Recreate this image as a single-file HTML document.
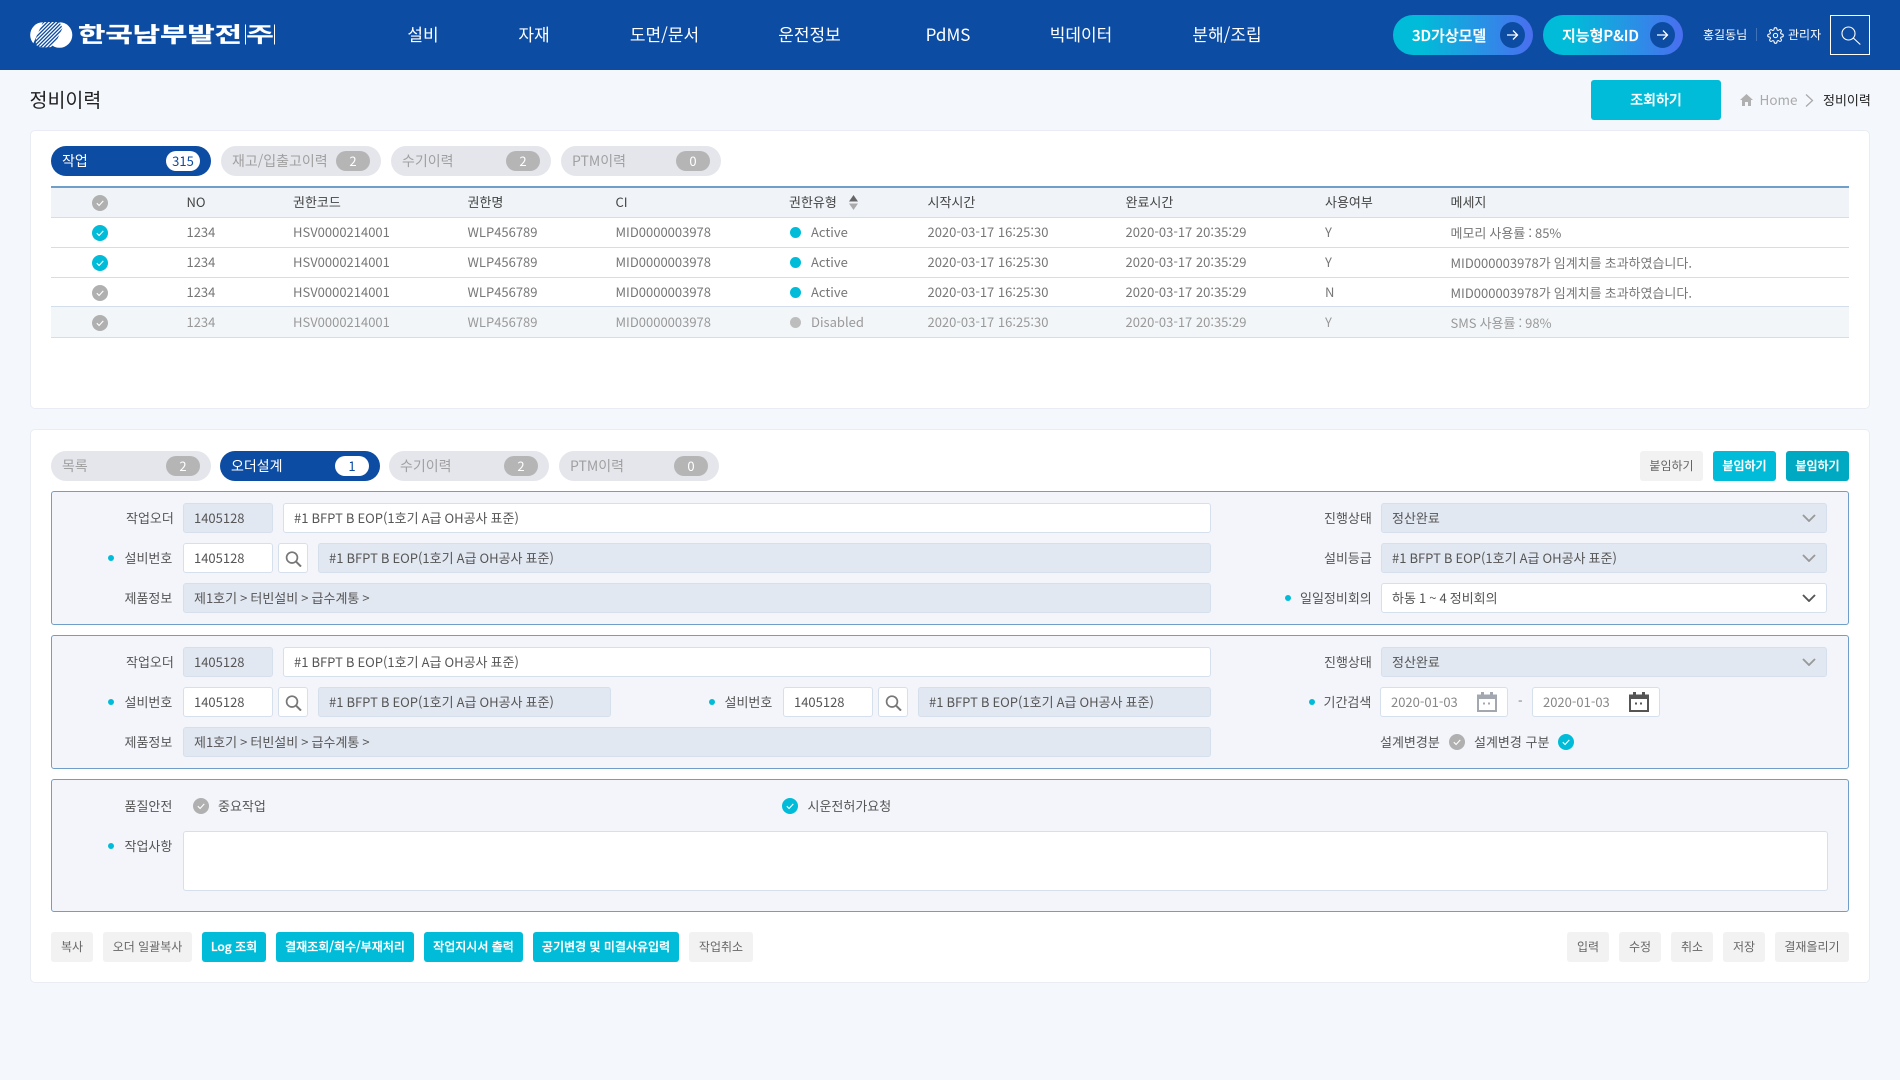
<!DOCTYPE html>
<html lang="ko"><head><meta charset="utf-8"><title>정비이력</title>
<style>
*{box-sizing:border-box}
html,body{margin:0;padding:0;width:1900px;height:1080px;overflow:hidden;background:#f4f7fc}
body{position:relative;font-family:"Noto Sans CJK KR","Liberation Sans",sans-serif;font-size:13px;color:#555;font-feature-settings:"calt" 0}
.a,.t,.f,.b,.tab,.lb,svg.i{position:absolute}
.t{white-space:nowrap;line-height:20px;height:20px}
.c{transform:translateX(-50%)}
.nav{color:#fff;font-size:17px;top:24px}
.card{position:absolute;left:30px;width:1840px;background:#fff;border:1px solid #e9edf3;border-radius:5px}
.tab{height:30px;width:160px;border-radius:15px;background:#e4e6eb;color:#a0a0a0;font-size:14px;line-height:31px;padding-left:11px;white-space:nowrap}
.tab b{position:absolute;right:11px;top:5px;width:34px;height:20px;border-radius:10px;background:#b5b5b5;color:#fff;font-weight:400;font-size:13px;line-height:20px;text-align:center}
.tab.on{background:#0d4ca3;color:#fff}.tab.on b{background:#fff;color:#0d4ca3}
.hd{color:#444;top:192px}
.r{color:#777}.r4{color:#999}
.m{word-spacing:-.6px}
.ln{position:absolute;left:51px;width:1798px;height:1px;background:#d4deea}
.box{position:absolute;left:51px;width:1798px;background:#f3f5fa;border:1px solid #6f9ec9;border-radius:3px}
.f{height:30px;line-height:28px;border:1px solid #d5e0ec;border-radius:3px;background:#fff;padding-left:10px;color:#555;white-space:nowrap;overflow:hidden;word-spacing:-.6px}
.f.ro{background:#e2e8f2}
.lb{line-height:20px;height:20px;color:#555;white-space:nowrap}
.dot{position:absolute;width:6px;height:6px;border-radius:50%;background:#00bcd8}
.b{height:30px;line-height:29px;border-radius:3px;background:#f2f2f2;color:#666;font-size:12px;text-align:center;white-space:nowrap}
.b.y{background:#00bcd8;color:#fff;font-weight:500;-webkit-text-stroke:.25px #fff}
.pill{position:absolute;top:15px;height:40px;width:140px;border-radius:20px;background:linear-gradient(90deg,#00bcd8 0%,#00bcd8 20%,#4a6ef0 100%);color:#fff;font-size:15px;font-weight:500;line-height:41px;white-space:nowrap;-webkit-text-stroke:.25px #fff}
.pill i{position:absolute;top:7px;right:8px;width:25px;height:26px;border-radius:50%;background:#0d4ca3}
.pill svg{position:absolute;left:6px;top:7px}
</style></head><body>
<svg width="0" height="0" style="position:absolute"><defs>
<symbol id="ck" viewBox="0 0 16 16"><circle cx="8" cy="8" r="8" fill="currentColor"/><path d="M4.8 8.2l2.3 2.3 4.2-4.6" fill="none" stroke="#fff" stroke-width="1.1"/></symbol>
<symbol id="mg" viewBox="0 0 17 16"><circle cx="7" cy="6.6" r="5.4" fill="none" stroke="#777" stroke-width="1.7"/><path d="M11 10.6l5 5" stroke="#777" stroke-width="2" fill="none"/></symbol>
<symbol id="chev" viewBox="0 0 14 8"><path d="M1 1l6 6 6-6" fill="none" stroke="currentColor" stroke-width="1.9"/></symbol>
<symbol id="cal" viewBox="0 0 20 20"><path d="M1 3.5h18v15.5H1z" fill="none" stroke="currentColor" stroke-width="2"/><path d="M1 3h18v4H1zM4 0h3v3H4zM13 0h3v3h-3z" fill="currentColor"/><path d="M6 10.500h2v2H6zM11 10.500h2v2h-2z" fill="currentColor"/></symbol>
<pattern id="st" width="2.6" height="2.6" patternUnits="userSpaceOnUse" patternTransform="rotate(-45)"><rect width="2.600" height="1.300" fill="#fff"/></pattern>
</defs></svg>

<!-- header -->
<div class="a" style="left:0;top:0;width:1900px;height:70px;background:#0d4ca3"></div>
<svg class="i" style="left:30px;top:22px" width="44" height="26" viewBox="0 0 44 26">
<circle cx="13" cy="13" r="12.800" fill="#fff"/><circle cx="29.500" cy="13" r="12.800" fill="#fff"/>
<path d="M13 0h16.500l3 6L26 20 16 26l-10-1-3-3z" fill="#0d4ca3"/>
<path d="M12 .5C20 -1 31 0 37 3 38 10 30 22 22 25 14 26 9 25 6 23 5 15 8 5 12 .5z" fill="url(#st)"/>
</svg>
<svg class="i" style="left:76px;top:18px" width="205" height="32" viewBox="0 0 205 32">
<text x="2" y="24" font-family="Noto Sans CJK KR" font-weight="700" font-size="21" fill="#fff" textLength="164" lengthAdjust="spacingAndGlyphs" stroke="#fff" stroke-width=".3">한국남부발전</text>
<path d="M169.500 6.500v20M198.500 6.500v20" stroke="#fff" stroke-width="1"/>
<text x="170" y="24" font-family="Noto Sans CJK KR" font-weight="700" font-size="21" fill="#fff" textLength="28" lengthAdjust="spacingAndGlyphs">주</text>
</svg>
<div class="t nav c" style="left:423px">설비</div>
<div class="t nav c" style="left:534px">자재</div>
<div class="t nav c" style="left:664.500px">도면/문서</div>
<div class="t nav c" style="left:809.500px">운전정보</div>
<div class="t nav c" style="left:948px">PdMS</div>
<div class="t nav c" style="left:1081px">빅데이터</div>
<div class="t nav c" style="left:1227px">분해/조립</div>
<div class="pill" style="left:1393px;padding-left:19px">3D가상모델<i><svg width="13" height="12" viewBox="0 0 13 12"><path d="M1 6h10M7 1.500L11.500 6 7 10.500" fill="none" stroke="#fff" stroke-width="1.300"/></svg></i></div>
<div class="pill" style="left:1543px;padding-left:19px">지능형P&amp;ID<i><svg width="13" height="12" viewBox="0 0 13 12"><path d="M1 6h10M7 1.500L11.500 6 7 10.500" fill="none" stroke="#fff" stroke-width="1.300"/></svg></i></div>
<div class="t" style="left:1703px;top:25px;color:#fff;font-size:12px">홍길동님</div>
<div class="a" style="left:1756px;top:28px;width:1px;height:13px;background:#3f72b8"></div>
<svg class="i" style="left:1767px;top:27px" width="17" height="17" viewBox="0 0 24 24" fill="none" stroke="#fff" stroke-width="1.500"><circle cx="12" cy="12" r="3"/><path d="M19.400 15a1.650 1.650 0 0 0 .33 1.820l.06.06a2 2 0 0 1 0 2.830 2 2 0 0 1-2.830 0l-.06-.06a1.650 1.650 0 0 0-1.820-.33 1.650 1.650 0 0 0-1 1.510V21a2 2 0 0 1-2 2 2 2 0 0 1-2-2v-.09A1.650 1.650 0 0 0 9 19.400a1.650 1.650 0 0 0-1.820.33l-.06.06a2 2 0 0 1-2.830 0 2 2 0 0 1 0-2.830l.06-.06a1.650 1.650 0 0 0 .33-1.820 1.650 1.650 0 0 0-1.510-1H3a2 2 0 0 1-2-2 2 2 0 0 1 2-2h.09A1.650 1.650 0 0 0 4.600 9a1.650 1.650 0 0 0-.33-1.820l-.06-.06a2 2 0 0 1 0-2.830 2 2 0 0 1 2.830 0l.06.06a1.650 1.650 0 0 0 1.820.33H9a1.650 1.650 0 0 0 1-1.510V3a2 2 0 0 1 2-2 2 2 0 0 1 2 2v.09a1.650 1.650 0 0 0 1 1.510 1.650 1.650 0 0 0 1.820-.33l.06-.06a2 2 0 0 1 2.830 0 2 2 0 0 1 0 2.830l-.06.06a1.650 1.650 0 0 0-.33 1.820V9a1.650 1.650 0 0 0 1.510 1H21a2 2 0 0 1 2 2 2 2 0 0 1-2 2h-.09a1.650 1.650 0 0 0-1.510 1z"/></svg>
<div class="t" style="left:1788px;top:25px;color:#fff;font-size:12px">관리자</div>
<div class="a" style="left:1830px;top:15px;width:40px;height:40px;border:1px solid #fff"></div>
<svg class="i" style="left:1841px;top:26px" width="20" height="19" viewBox="0 0 20 19"><circle cx="7.500" cy="7.500" r="6.500" fill="none" stroke="#fff" stroke-width="1.100"/><path d="M12.300 12l7 6.500" stroke="#fff" stroke-width="1.100"/></svg>

<!-- title -->
<div class="t" style="left:29.500px;top:87px;height:24px;line-height:24px;font-size:19.500px;color:#222">정비이력</div>
<div class="a" style="left:1591px;top:80px;width:130px;height:40px;border-radius:3px;background:#00bcd8;color:#fff;font-size:14px;font-weight:500;text-align:center;line-height:41px;-webkit-text-stroke:.25px #fff">조회하기</div>
<svg class="i" style="left:1740px;top:94px" width="13" height="12" viewBox="0 0 13 12"><path d="M6.500 0L13 6h-2v6H8V8H5v4H2V6H0z" fill="#b0b0b0"/></svg>
<div class="t" style="left:1759.500px;top:89px;color:#aaa;font-size:13.500px">Home</div>
<svg class="i" style="left:1805px;top:94px" width="9" height="13" viewBox="0 0 9 13"><path d="M1 .5l6.500 6-6.500 6" fill="none" stroke="#aaa" stroke-width="1.300"/></svg>
<div class="t" style="left:1823px;top:90px;color:#222">정비이력</div>

<!-- card 1 -->
<div class="card" style="top:130px;height:279px"></div>
<div class="tab on" style="left:51px;top:146px">작업<b>315</b></div>
<div class="tab" style="left:221px;top:146px">재고/입출고이력<b>2</b></div>
<div class="tab" style="left:391px;top:146px">수기이력<b>2</b></div>
<div class="tab" style="left:561px;top:146px">PTM이력<b>0</b></div>

<div class="a" style="left:51px;top:186px;width:1798px;height:31px;background:#f0f4f8;border-top:2px solid #6f9ec9"></div>
<div class="a" style="left:51px;top:307px;width:1798px;height:30px;background:#f3f6f9"></div>
<div class="ln" style="top:217px"></div><div class="ln" style="top:247px"></div><div class="ln" style="top:277px"></div><div class="ln" style="top:306px"></div><div class="ln" style="top:337px"></div>

<svg class="i" style="left:92px;top:195px;color:#b0b0b0" width="16" height="16"><use href="#ck"/></svg>
<div class="t hd" style="left:186.500px">NO</div>
<div class="t hd" style="left:293px">권한코드</div>
<div class="t hd" style="left:467.500px">권한명</div>
<div class="t hd" style="left:615.500px">CI</div>
<div class="t hd" style="left:789px">권한유형</div>
<svg class="i" style="left:849px;top:195px" width="9" height="15" viewBox="0 0 9 15"><path d="M4.500 0L9 6.500H0z" fill="#666"/><path d="M4.500 15L9 8.500H0z" fill="#aaa"/></svg>
<div class="t hd" style="left:927.500px">시작시간</div>
<div class="t hd" style="left:1125.500px">완료시간</div>
<div class="t hd" style="left:1325px">사용여부</div>
<div class="t hd" style="left:1450.500px">메세지</div>

<svg class="i" style="left:92px;top:225px;color:#00bcd8" width="16" height="16"><use href="#ck"/></svg>
<div class="t r" style="left:186.500px;top:222px">1234</div><div class="t r" style="left:293px;top:222px">HSV0000214001</div><div class="t r" style="left:467.500px;top:222px">WLP456789</div><div class="t r" style="left:615.500px;top:222px">MID0000003978</div>
<div class="dot" style="left:790px;top:227px;width:11px;height:11px"></div><div class="t r" style="left:811px;top:222px">Active</div>
<div class="t r" style="left:927.500px;top:222px">2020-03-17 16:25:30</div><div class="t r" style="left:1125.500px;top:222px">2020-03-17 20:35:29</div><div class="t r" style="left:1325px;top:222px">Y</div><div class="t r m" style="left:1450.500px;top:223px">메모리 사용률 : 85%</div>

<svg class="i" style="left:92px;top:255px;color:#00bcd8" width="16" height="16"><use href="#ck"/></svg>
<div class="t r" style="left:186.500px;top:252px">1234</div><div class="t r" style="left:293px;top:252px">HSV0000214001</div><div class="t r" style="left:467.500px;top:252px">WLP456789</div><div class="t r" style="left:615.500px;top:252px">MID0000003978</div>
<div class="dot" style="left:790px;top:257px;width:11px;height:11px"></div><div class="t r" style="left:811px;top:252px">Active</div>
<div class="t r" style="left:927.500px;top:252px">2020-03-17 16:25:30</div><div class="t r" style="left:1125.500px;top:252px">2020-03-17 20:35:29</div><div class="t r" style="left:1325px;top:252px">Y</div><div class="t r m" style="left:1450.500px;top:253px">MID000003978가 임계치를 초과하였습니다.</div>

<svg class="i" style="left:92px;top:285px;color:#b0b0b0" width="16" height="16"><use href="#ck"/></svg>
<div class="t r" style="left:186.500px;top:282px">1234</div><div class="t r" style="left:293px;top:282px">HSV0000214001</div><div class="t r" style="left:467.500px;top:282px">WLP456789</div><div class="t r" style="left:615.500px;top:282px">MID0000003978</div>
<div class="dot" style="left:790px;top:287px;width:11px;height:11px"></div><div class="t r" style="left:811px;top:282px">Active</div>
<div class="t r" style="left:927.500px;top:282px">2020-03-17 16:25:30</div><div class="t r" style="left:1125.500px;top:282px">2020-03-17 20:35:29</div><div class="t r" style="left:1325px;top:282px">N</div><div class="t r m" style="left:1450.500px;top:283px">MID000003978가 임계치를 초과하였습니다.</div>

<svg class="i" style="left:92px;top:315px;color:#b0b0b0" width="16" height="16"><use href="#ck"/></svg>
<div class="t r4" style="left:186.500px;top:312px">1234</div><div class="t r4" style="left:293px;top:312px">HSV0000214001</div><div class="t r4" style="left:467.500px;top:312px">WLP456789</div><div class="t r4" style="left:615.500px;top:312px">MID0000003978</div>
<div class="dot" style="left:790px;top:317px;width:11px;height:11px;background:#bdbdbd"></div><div class="t r4" style="left:811px;top:312px">Disabled</div>
<div class="t r4" style="left:927.500px;top:312px">2020-03-17 16:25:30</div><div class="t r4" style="left:1125.500px;top:312px">2020-03-17 20:35:29</div><div class="t r4" style="left:1325px;top:312px">Y</div><div class="t r4 m" style="left:1450.500px;top:313px">SMS 사용률 : 98%</div>

<!-- card 2 -->
<div class="card" style="top:429px;height:554px"></div>
<div class="tab" style="left:51px;top:451px">목록<b>2</b></div>
<div class="tab on" style="left:220px;top:451px">오더설계<b>1</b></div>
<div class="tab" style="left:389px;top:451px">수기이력<b>2</b></div>
<div class="tab" style="left:559px;top:451px">PTM이력<b>0</b></div>
<div class="b" style="left:1640px;top:451px;width:63px">붙임하기</div>
<div class="b y" style="left:1713px;top:451px;width:63px">붙임하기</div>
<div class="b y" style="left:1786px;top:451px;width:63px;background:#00a9c2">붙임하기</div>

<!-- box 1 -->
<div class="box" style="top:491px;height:134px"></div>
<div class="lb" style="left:126px;top:508px">작업오더</div>
<div class="f ro" style="left:183px;top:503px;width:90px">1405128</div>
<div class="f" style="left:283px;top:503px;width:928px">#1 BFPT B EOP(1호기 A급 OH공사 표준)</div>
<div class="dot" style="left:108px;top:555px"></div>
<div class="lb" style="left:124.500px;top:548px">설비번호</div>
<div class="f" style="left:183px;top:543px;width:90px">1405128</div>
<div class="f" style="left:278px;top:543px;width:30px"></div>
<svg class="i" style="left:285px;top:551px" width="17" height="16"><use href="#mg"/></svg>
<div class="f ro" style="left:318px;top:543px;width:893px">#1 BFPT B EOP(1호기 A급 OH공사 표준)</div>
<div class="lb" style="left:124.500px;top:588px">제품정보</div>
<div class="f ro" style="left:183px;top:583px;width:1028px">제1호기 &gt; 터빈설비 &gt; 급수계통 &gt;</div>

<div class="lb" style="left:1324px;top:508px">진행상태</div>
<div class="f ro" style="left:1381px;top:503px;width:446px">정산완료</div>
<svg class="i" style="left:1802px;top:514px;color:#999" width="14" height="8"><use href="#chev"/></svg>
<div class="lb" style="left:1324px;top:548px">설비등급</div>
<div class="f ro" style="left:1381px;top:543px;width:446px">#1 BFPT B EOP(1호기 A급 OH공사 표준)</div>
<svg class="i" style="left:1802px;top:554px;color:#999" width="14" height="8"><use href="#chev"/></svg>
<div class="dot" style="left:1285px;top:595px"></div>
<div class="lb" style="left:1300px;top:588px">일일정비회의</div>
<div class="f" style="left:1381px;top:583px;width:446px">하동 1 ~ 4 정비회의</div>
<svg class="i" style="left:1802px;top:594px;color:#555" width="14" height="8"><use href="#chev"/></svg>

<!-- box 2 -->
<div class="box" style="top:635px;height:134px"></div>
<div class="lb" style="left:126px;top:652px">작업오더</div>
<div class="f ro" style="left:183px;top:647px;width:90px">1405128</div>
<div class="f" style="left:283px;top:647px;width:928px">#1 BFPT B EOP(1호기 A급 OH공사 표준)</div>
<div class="dot" style="left:108px;top:699px"></div>
<div class="lb" style="left:124.500px;top:692px">설비번호</div>
<div class="f" style="left:183px;top:687px;width:90px">1405128</div>
<div class="f" style="left:278px;top:687px;width:30px"></div>
<svg class="i" style="left:285px;top:695px" width="17" height="16"><use href="#mg"/></svg>
<div class="f ro" style="left:318px;top:687px;width:293px">#1 BFPT B EOP(1호기 A급 OH공사 표준)</div>
<div class="dot" style="left:709px;top:699px"></div>
<div class="lb" style="left:724.500px;top:692px">설비번호</div>
<div class="f" style="left:783px;top:687px;width:90px">1405128</div>
<div class="f" style="left:878px;top:687px;width:30px"></div>
<svg class="i" style="left:885px;top:695px" width="17" height="16"><use href="#mg"/></svg>
<div class="f ro" style="left:918px;top:687px;width:293px">#1 BFPT B EOP(1호기 A급 OH공사 표준)</div>
<div class="lb" style="left:124.500px;top:732px">제품정보</div>
<div class="f ro" style="left:183px;top:727px;width:1028px">제1호기 &gt; 터빈설비 &gt; 급수계통 &gt;</div>

<div class="lb" style="left:1324px;top:652px">진행상태</div>
<div class="f ro" style="left:1381px;top:647px;width:446px">정산완료</div>
<svg class="i" style="left:1802px;top:658px;color:#999" width="14" height="8"><use href="#chev"/></svg>
<div class="dot" style="left:1309px;top:699px"></div>
<div class="lb" style="left:1323.500px;top:692px">기간검색</div>
<div class="f" style="left:1380px;top:687px;width:128px;color:#888">2020-01-03</div>
<svg class="i" style="left:1477px;top:692px;color:#a3a8b0" width="20" height="20"><use href="#cal"/></svg>
<div class="t" style="left:1518px;top:691px;color:#777">-</div>
<div class="f" style="left:1532px;top:687px;width:128px;color:#888">2020-01-03</div>
<svg class="i" style="left:1629px;top:692px;color:#555" width="20" height="20"><use href="#cal"/></svg>
<div class="lb" style="left:1380px;top:732px">설계변경분</div>
<svg class="i" style="left:1449px;top:734px;color:#b0b0b0" width="16" height="16"><use href="#ck"/></svg>
<div class="lb" style="left:1474px;top:732px">설계변경 구분</div>
<svg class="i" style="left:1558px;top:734px;color:#00bcd8" width="16" height="16"><use href="#ck"/></svg>

<!-- box 3 -->
<div class="box" style="top:779px;height:133px"></div>
<div class="lb" style="left:124.500px;top:796px">품질안전</div>
<svg class="i" style="left:193px;top:798px;color:#b0b0b0" width="16" height="16"><use href="#ck"/></svg>
<div class="lb" style="left:218px;top:796px">중요작업</div>
<svg class="i" style="left:782px;top:798px;color:#00bcd8" width="16" height="16"><use href="#ck"/></svg>
<div class="lb" style="left:807.500px;top:796px">시운전허가요청</div>
<div class="dot" style="left:108px;top:843px"></div>
<div class="lb" style="left:124.500px;top:836px">작업사항</div>
<div class="f" style="left:183px;top:831px;width:1645px;height:60px"></div>

<!-- bottom buttons -->
<div class="b" style="left:51px;top:932px;width:42px">복사</div>
<div class="b" style="left:103px;top:932px;width:89px">오더 일괄복사</div>
<div class="b y" style="left:202px;top:932px;width:64px">Log 조회</div>
<div class="b y" style="left:276px;top:932px;width:138px">결재조회/회수/부재처리</div>
<div class="b y" style="left:424px;top:932px;width:99px">작업지시서 출력</div>
<div class="b y" style="left:533px;top:932px;width:146px">공기변경 및 미결사유입력</div>
<div class="b" style="left:689px;top:932px;width:64px">작업취소</div>
<div class="b" style="left:1567px;top:932px;width:42px">입력</div>
<div class="b" style="left:1619px;top:932px;width:42px">수정</div>
<div class="b" style="left:1671px;top:932px;width:42px">취소</div>
<div class="b" style="left:1723px;top:932px;width:42px">저장</div>
<div class="b" style="left:1775px;top:932px;width:74px">결재올리기</div>
</body></html>
